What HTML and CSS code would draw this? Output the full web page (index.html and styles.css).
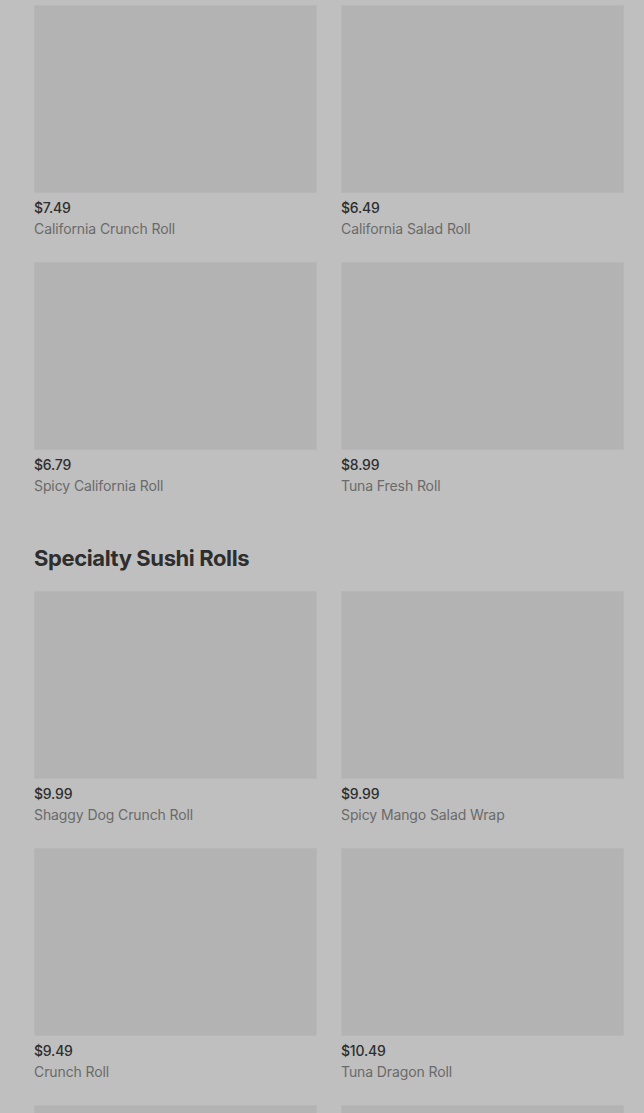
FILE: index.html
```html
<!DOCTYPE html>
<html lang="en">
<head>
    <meta charset="UTF-8">
    <meta name="viewport" content="width=device-width, initial-scale=1.0">
    <title>Sushi Rolls</title>
    <link rel="stylesheet" href="styles.css">
</head>
<body>
    <div class="menu">
        <div class="section">
            <div class="grid">
                <div class="item">
                    <div class="thumb"></div>
                    <div class="price">$7.49</div>
                    <div class="name">California Crunch Roll</div>
                </div>
                <div class="item">
                    <div class="thumb"></div>
                    <div class="price">$6.49</div>
                    <div class="name">California Salad Roll</div>
                </div>
                <div class="item">
                    <div class="thumb"></div>
                    <div class="price">$6.79</div>
                    <div class="name">Spicy California Roll</div>
                </div>
                <div class="item">
                    <div class="thumb"></div>
                    <div class="price">$8.99</div>
                    <div class="name">Tuna Fresh Roll</div>
                </div>
            </div>
        </div>

        <div class="section">
            <h2 class="section-title">Specialty Sushi Rolls</h2>
            <div class="grid">
                <div class="item">
                    <div class="thumb"></div>
                    <div class="price">$9.99</div>
                    <div class="name">Shaggy Dog Crunch Roll</div>
                </div>
                <div class="item">
                    <div class="thumb"></div>
                    <div class="price">$9.99</div>
                    <div class="name">Spicy Mango Salad Wrap</div>
                </div>
                <div class="item">
                    <div class="thumb"></div>
                    <div class="price">$9.49</div>
                    <div class="name">Crunch Roll</div>
                </div>
                <div class="item">
                    <div class="thumb"></div>
                    <div class="price">$10.49</div>
                    <div class="name">Tuna Dragon Roll</div>
                </div>
                <!-- next row only peeks in at the bottom edge -->
                <div class="item">
                    <div class="thumb"></div>
                </div>
                <div class="item">
                    <div class="thumb"></div>
                </div>
            </div>
        </div>
    </div>
</body>
</html>
```

FILE: styles.css
```css
html, body {
    margin: 0;
    height: 100%;
    overflow: hidden;
}
body {
    font-family: Inter, "Noto Sans", sans-serif;
    background-color: #bfbfbf;
    color: #333;
}
.menu {
    padding: 5px 20px 0 34px;
}
.grid {
    display: grid;
    grid-template-columns: 1fr 1fr;
    column-gap: 24px;
    row-gap: 23px;
}
.thumb {
    height: 186px;
    background-color: #b3b3b3;
    border: 1px solid #b7b7b7;
}
.price {
    margin-top: 5px;
    font-size: 14px;
    line-height: 20px;
    font-weight: 500;
    letter-spacing: -0.2px;
    color: #2e2e2e;
}
.name {
    margin-top: 1px;
    font-size: 14px;
    line-height: 20px;
    letter-spacing: -0.1px;
    color: #6a6a6a;
}
.section-title {
    margin: 48px 0 19px;
    font-size: 22px;
    line-height: 28px;
    font-weight: 700;
    letter-spacing: -0.4px;
    color: #2e2e2e;
}
```
